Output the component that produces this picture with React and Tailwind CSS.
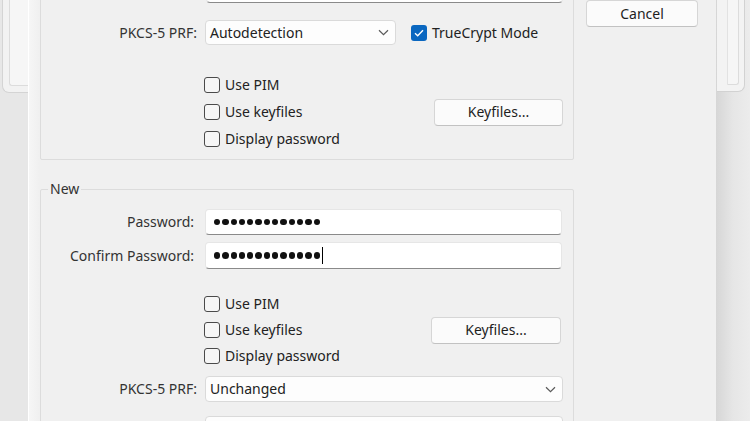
import React from "react";

function Chevron() {
  return (
    <svg width="11" height="7" viewBox="0 0 11 7" className="shrink-0">
      <path d="M1 1.2 L5.5 5.6 L10 1.2" fill="none" stroke="#5a5a5a" strokeWidth="1.2" />
    </svg>
  );
}

function Check({ checked, label }) {
  return (
    <div className="flex items-center gap-[5px]">
      {checked ? (
        <div className="w-[16px] h-[16px] rounded-[3px] bg-[#0a67c0] flex items-center justify-center">
          <svg width="10" height="8" viewBox="0 0 10 8">
            <path d="M1 4.2 L3.7 6.7 L9 1.2" fill="none" stroke="#ffffff" strokeWidth="1.4" />
          </svg>
        </div>
      ) : (
        <div className="w-[16px] h-[16px] rounded-[3px] border border-[#4a4a4a] bg-[#f6f6f6]" />
      )}
      <span className="leading-none">{label}</span>
    </div>
  );
}

function Dots({ n, caret }) {
  return (
    <div className="flex items-center gap-[2px] pl-[8px]">
      {Array.from({ length: n }).map((_, i) => (
        <div key={i} className="w-[6.3px] h-[6.3px] rounded-full bg-[#111]" />
      ))}
      {caret && <div className="w-[1.5px] h-[17px] bg-black" />}
    </div>
  );
}

function Input({ children, w }) {
  return (
    <div className={`${w} h-[26px] bg-white border border-[#e6e6e6] border-b-[#8a8a8a] rounded-[4px] flex items-center`}>
      {children}
    </div>
  );
}

function Select({ w, text }) {
  return (
    <div className={`${w} h-[25px] bg-[#fdfdfd] border border-[#dadada] rounded-[4px] flex items-center justify-between pl-[4px] pr-[6px]`}>
      <span className="leading-none">{text}</span>
      <Chevron />
    </div>
  );
}

function Button({ w, children }) {
  return (
    <div className={`${w} h-[27px] bg-[#fbfbfb] border border-[#d6d6d6] border-b-[#c2c2c2] rounded-[4px] flex items-center justify-center`}>
      <span className="leading-none text-[#1e1e1e]">{children}</span>
    </div>
  );
}

function Label({ children, pr = "" }) {
  return <div className={`w-[156px] text-right leading-none text-[#333] ${pr}`}>{children}</div>;
}

export default function App() {
  return (
    <div className="w-[750px] h-[421px] overflow-hidden flex bg-[#e7e7e7] font-['Noto_Sans',sans-serif] text-[14px] text-[#222]">
      {/* left background window */}
      <div className="w-[28px] shrink-0 flex flex-col">
        <div className="h-[93px] ml-[2px] bg-[#f2f2f2] border-l border-b border-[#d4d4d4] rounded-bl-[7px] pl-[5px] pb-[6px]">
          <div className="h-full border-l border-b border-[#dcdcdc] rounded-bl-[3px] bg-[#f6f6f6] ml-[1px]" />
        </div>
      </div>

      {/* dialog */}
      <div className="w-[688px] shrink-0 bg-[#f0f0f0] border-l border-white flex">
        <div className="w-[10px] shrink-0 bg-gradient-to-r from-[#f6f6f6] to-[#f0f0f0]" />
        {/* left column */}
        <div className="w-[534px] shrink-0 ml-[1px] flex flex-col">
          {/* Current group */}
          <fieldset className="mt-[-30px] border border-[#dcdcdc] rounded-[2px] pt-[6px] pb-[7px] pr-[10px]">
            <div className="flex justify-end">
              <Input w="w-[357px]" />
            </div>
            <div className="flex items-center mt-[17px]">
              <Label>PKCS-5 PRF:</Label>
              <div className="ml-[8px]">
                <Select w="w-[191px]" text="Autodetection" />
              </div>
              <div className="ml-[15px]">
                <Check checked label="TrueCrypt Mode" />
              </div>
            </div>
            <div className="mt-[26px] pl-[163px] flex flex-col">
              <div className="h-[27px] flex items-center">
                <Check label="Use PIM" />
              </div>
              <div className="h-[27px] flex items-center justify-between pt-[1px]">
                <Check label="Use keyfiles" />
                <Button w="w-[129px]">Keyfiles...</Button>
              </div>
              <div className="h-[27px] flex items-center">
                <Check label="Display password" />
              </div>
            </div>
          </fieldset>

          {/* New group */}
          <fieldset className="mt-[20px] border border-[#dcdcdc] rounded-[2px] pr-[10px]">
            <legend className="ml-[7px] px-[2px] leading-[18px] text-[#333]">New</legend>
            <div className="flex items-center mt-[11px]">
              <Label pr="pr-[3px]">Password:</Label>
              <div className="ml-[8px]">
                <Input w="w-[357px]">
                  <Dots n={13} />
                </Input>
              </div>
            </div>
            <div className="flex items-center mt-[7px]">
              <Label pr="pr-[3px]">Confirm Password:</Label>
              <div className="ml-[8px]">
                <Input w="w-[357px] h-[27px]">
                  <Dots n={13} caret />
                </Input>
              </div>
            </div>
            <div className="mt-[22px] pl-[163px] flex flex-col">
              <div className="h-[26px] flex items-center">
                <Check label="Use PIM" />
              </div>
              <div className="h-[26px] flex items-center justify-between pr-[2px]">
                <Check label="Use keyfiles" />
                <Button w="w-[130px]">Keyfiles...</Button>
              </div>
              <div className="h-[26px] flex items-center">
                <Check label="Display password" />
              </div>
            </div>
            <div className="flex items-center mt-[7px]">
              <Label>PKCS-5 PRF:</Label>
              <div className="ml-[8px]">
                <Select w="w-[358px] h-[26px]" text="Unchanged" />
              </div>
            </div>
            <div className="flex items-center mt-[14px]">
              <Label></Label>
              <div className="ml-[8px]">
                <Select w="w-[358px]" text="" />
              </div>
            </div>
          </fieldset>
        </div>

        {/* right column */}
        <div className="ml-[12px] w-[112px] shrink-0 flex flex-col">
          <Button w="w-[112px]">Cancel</Button>
        </div>
      </div>

      {/* right background */}
      <div className="flex-1 bg-gradient-to-r from-[#d6d6d6] via-[#e6e6e6] to-[#ececec] flex flex-col">
        <div className="h-[92px] mr-[5px] ml-[1px] bg-[#f3f3f3] border-r border-b border-[#d2d2d2] rounded-br-[7px] pr-[5px] pb-[6px]">
          <div className="h-full border-r border-b border-[#dcdcdc] rounded-br-[3px] bg-[#f6f6f6] ml-[10px] border-l border-l-[#e2e2e2]" />
        </div>
      </div>
    </div>
  );
}
